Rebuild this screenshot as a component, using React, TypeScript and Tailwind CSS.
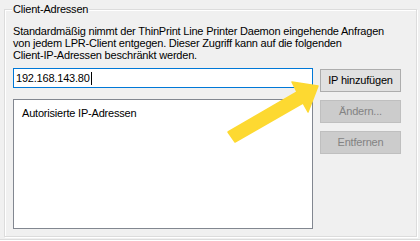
export default function App() {
  return (
    <div className="relative w-[420px] h-[241px] overflow-hidden bg-[#f0f0f0] font-['Liberation_Sans',Arial,sans-serif] text-[11px] tracking-[-0.2px] text-black">
      <fieldset className="mt-px ml-[4px] w-[413px] border border-[#dcdcdc] px-[8px] pb-[7px] shadow-[1px_1px_0_#fff,inset_1px_1px_0_#fff]">
        <legend className="-ml-px bg-[#f0f0f0] px-px leading-[16px]">Client-Adressen</legend>
        <p className="mt-[8px] whitespace-nowrap leading-[12px]">
          Standardmäßig nimmt der ThinPrint Line Printer Daemon eingehende Anfragen
          <br />
          von jedem LPR-Client entgegen. Dieser Zugriff kann auf die folgenden
          <br />
          Client-IP-Adressen beschränkt werden.
        </p>

        <div className="mt-[7px] flex items-start gap-[7px]">
          <div className="flex w-[300px] flex-col">
            <div className="flex h-[20px] items-center border border-[#0078d7] bg-white pl-[2px]">
              <span>192.168.143.80</span>
              <span className="ml-px inline-block h-[13px] w-px bg-black" />
            </div>
            <div className="mt-[11px] h-[130px] border border-[#828790] bg-white pl-[8px] pt-[6px] leading-[14px]">
              Autorisierte IP-Adressen
            </div>
          </div>

          <div className="flex w-[81px] flex-col gap-[8px] pt-px">
            <button className="h-[23px] border border-[#adadad] bg-[#e1e1e1] text-black">
              IP hinzufügen
            </button>
            <button disabled className="h-[23px] border border-[#bfbfbf] bg-[#cccccc] text-[#838383]">
              Ändern...
            </button>
            <button disabled className="h-[23px] border border-[#bfbfbf] bg-[#cccccc] text-[#838383]">
              Entfernen
            </button>
          </div>
        </div>
      </fieldset>
      <div className="mt-[2px] border-t border-[#dcdcdc] shadow-[0_1px_0_#fff]" />

      {/* gelber Pfeil auf den Button */}
      <svg className="pointer-events-none absolute left-0 top-0" width="420" height="241" viewBox="0 0 420 241">
        <polygon
          points="228,132 297,92 292,82 318,86 308,112 303,103 235,142"
          fill="#fdd931"
          stroke="#fdd931"
          strokeWidth="1.5"
          strokeLinejoin="round"
        />
      </svg>
    </div>
  );
}
